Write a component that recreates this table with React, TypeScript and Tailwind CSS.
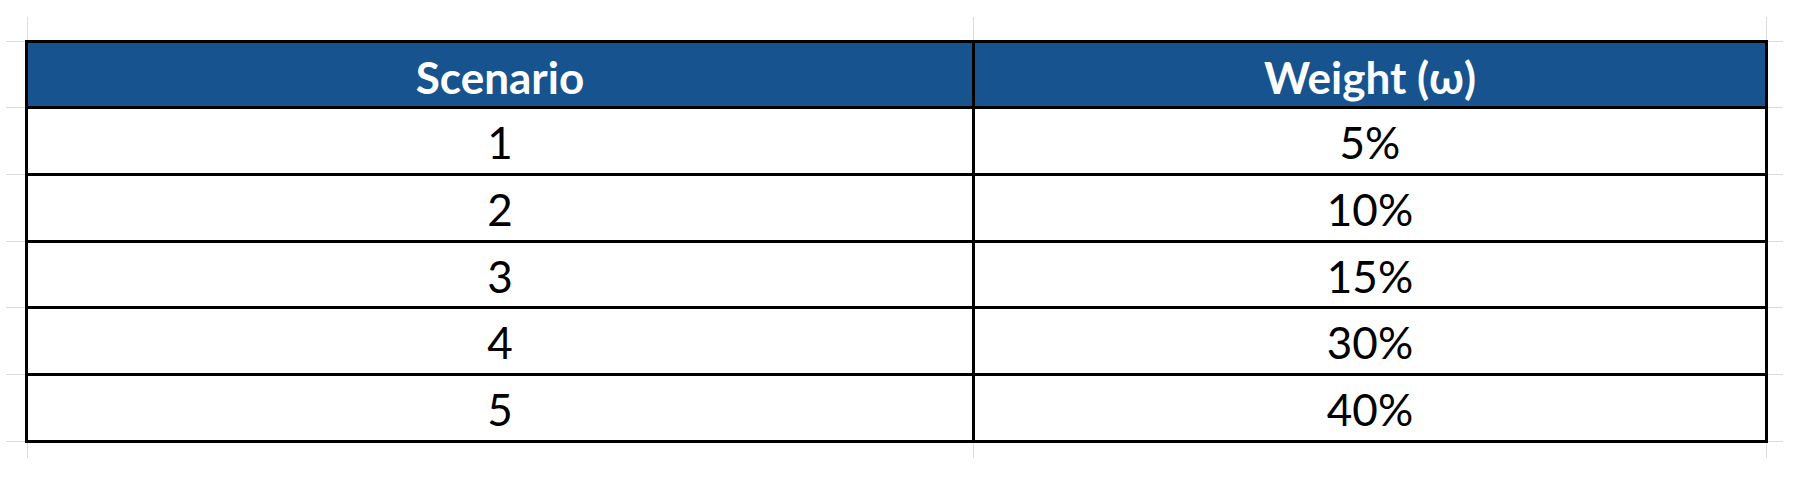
const rows = [
  { scenario: '1', weight: '5%' },
  { scenario: '2', weight: '10%' },
  { scenario: '3', weight: '15%' },
  { scenario: '4', weight: '30%' },
  { scenario: '5', weight: '40%' },
];

// row content heights: pitch 66/67 incl. 3px border
const heights = ['h-[63px]', 'h-[64px]', 'h-[64px]', 'h-[63px]', 'h-[64px]', 'h-[64px]'];

const font = { fontFamily: 'Lato, "Open Sans", sans-serif' };

// faint spreadsheet gridline stubs
const LeftStub = () => (
  <div className="w-[25px] shrink-0 flex flex-col">
    <div className="h-[1px]" />
    <div className="h-[1px] ml-[6px] bg-[#dcdcdc]" />
  </div>
);

const RightStub = () => (
  <div className="w-[15px] shrink-0 flex flex-col">
    <div className="h-[1px]" />
    <div className="h-[1px] bg-[#dcdcdc]" />
  </div>
);

const VerticalStubs = ({ height }: { height: string }) => (
  <div className={`flex ${height}`}>
    <div className="ml-[27px] w-[1px] h-full bg-[#dcdcdc]" />
    <div className="ml-[945px] w-[1px] h-full bg-[#dcdcdc]" />
    <div className="ml-[792px] w-[1px] h-full bg-[#dcdcdc]" />
  </div>
);

export default function App() {
  return (
    <div className="w-[1800px] h-[480px] bg-white pt-[17px]" style={font}>
      <VerticalStubs height="h-[23px]" />

      {/* header */}
      <div className="flex">
        <LeftStub />
        <div className="w-[944px] h-[63px] box-content border-t-[3px] border-l-[3px] border-black bg-[#17538f] text-white font-bold text-[44px] flex items-center justify-center">
          <span className="leading-none pt-[4px]">Scenario</span>
        </div>
        <div className="w-[790px] h-[63px] box-content border-t-[3px] border-l-[3px] border-r-[3px] border-black bg-[#17538f] text-white font-bold text-[44px] flex items-center justify-center">
          <span className="leading-none pt-[4px]">Weight (ω)</span>
        </div>
        <RightStub />
      </div>

      {rows.map((r, i) => (
        <div key={r.scenario} className="flex">
          <LeftStub />
          <div
            className={`w-[944px] ${heights[i + 1]} box-content border-t-[3px] border-l-[3px] border-black text-black text-[44px] flex items-center justify-center`}
          >
            <span className="leading-none pt-[2px]">{r.scenario}</span>
          </div>
          <div
            className={`w-[790px] ${heights[i + 1]} box-content border-t-[3px] border-l-[3px] border-r-[3px] border-black text-black text-[44px] flex items-center justify-center`}
          >
            <span className="leading-none pt-[2px]">{r.weight}</span>
          </div>
          <RightStub />
        </div>
      ))}

      {/* bottom border */}
      <div className="flex h-[3px]">
        <LeftStub />
        <div className="w-[1743px] h-[3px] bg-black" />
        <RightStub />
      </div>

      <VerticalStubs height="h-[15px]" />
    </div>
  );
}
